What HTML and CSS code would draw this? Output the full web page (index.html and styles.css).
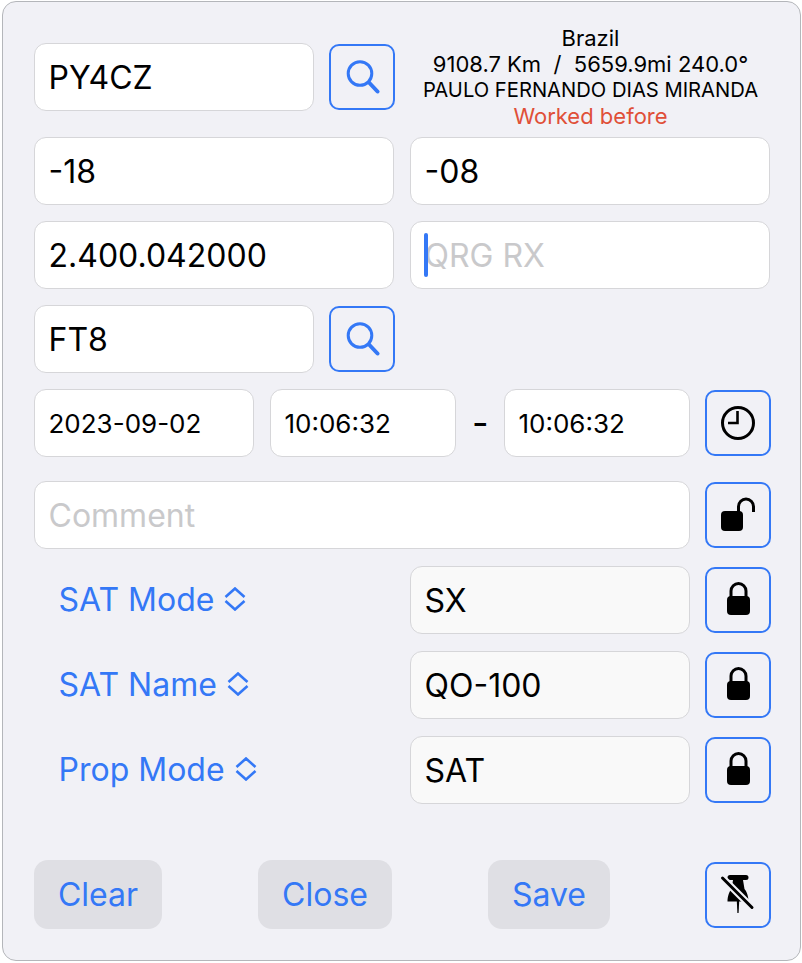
FILE: index.html
```html
<!DOCTYPE html>
<html lang="en">
<head>
    <meta charset="UTF-8">
    <meta name="viewport" content="width=device-width, initial-scale=1.0">
    <title>Log QSO</title>
    <link rel="stylesheet" href="styles.css">
</head>
<body>
    <form class="panel">
        <div class="row row-call">
            <input class="field field-call" type="text" value="PY4CZ">
            <button class="icon-btn" type="button" aria-label="Search callsign">
                <svg class="icon" viewBox="0 0 36 36"><circle cx="16" cy="14.5" r="11.8" class="stroke-blue"/><path d="M25 23.5l8.5 9" class="stroke-blue thick"/></svg>
            </button>
            <div class="info">
                <div>Brazil</div>
                <div>9108.7 Km &nbsp;/&nbsp; 5659.9mi 240.0°</div>
                <div class="info-name">PAULO FERNANDO DIAS MIRANDA</div>
                <div class="info-worked">Worked before</div>
            </div>
        </div>

        <div class="row">
            <input class="field field-half" type="text" value="-18">
            <input class="field field-half" type="text" value="-08">
        </div>

        <div class="row">
            <input class="field field-half" type="text" value="2.400.042000">
            <div class="caret-wrap">
                <input class="field field-half" type="text" placeholder="QRG RX">
                <span class="caret"></span>
            </div>
        </div>

        <div class="row">
            <input class="field field-call" type="text" value="FT8">
            <button class="icon-btn" type="button" aria-label="Search mode">
                <svg class="icon" viewBox="0 0 36 36"><circle cx="16" cy="14.5" r="11.8" class="stroke-blue"/><path d="M25 23.5l8.5 9" class="stroke-blue thick"/></svg>
            </button>
        </div>

        <div class="row row-time">
            <input class="field small field-date" type="text" value="2023-09-02">
            <input class="field small field-time" type="text" value="10:06:32">
            <span class="dash">-</span>
            <input class="field small field-time" type="text" value="10:06:32">
            <button class="icon-btn" type="button" aria-label="Set time">
                <svg class="icon" viewBox="0 0 36 36"><circle cx="18" cy="18" r="15.5" class="stroke-black"/><path d="M17.5 6v12H8" class="stroke-black thin"/></svg>
            </button>
        </div>

        <div class="row row-comment">
            <input class="field field-comment" type="text" placeholder="Comment">
            <button class="icon-btn" type="button" aria-label="Unlock comment">
                <svg class="icon" viewBox="0 0 36 36"><rect x="1" y="14" width="22" height="20" rx="4"/><path d="M18.5 15V9.5a7.5 7.5 0 0 1 15 0V15" class="stroke-black"/></svg>
            </button>
        </div>

        <div class="row row-sat">
            <div class="picker"><span>SAT Mode</span><svg class="updown" viewBox="0 0 22 24"><path d="M1.5 10L11 1.5 20.5 10M1.5 14l9.5 8.5L20.5 14"/></svg></div>
            <input class="field soft" type="text" value="SX">
            <button class="icon-btn" type="button" aria-label="Lock SAT mode">
                <svg class="icon" viewBox="0 0 36 36"><rect x="7" y="14" width="23" height="19" rx="4"/><path d="M11 16V9a7.5 7.5 0 0 1 15 0v7" class="stroke-black"/></svg>
            </button>
        </div>

        <div class="row row-sat">
            <div class="picker"><span>SAT Name</span><svg class="updown" viewBox="0 0 22 24"><path d="M1.5 10L11 1.5 20.5 10M1.5 14l9.5 8.5L20.5 14"/></svg></div>
            <input class="field soft" type="text" value="QO-100">
            <button class="icon-btn" type="button" aria-label="Lock SAT name">
                <svg class="icon" viewBox="0 0 36 36"><rect x="7" y="14" width="23" height="19" rx="4"/><path d="M11 16V9a7.5 7.5 0 0 1 15 0v7" class="stroke-black"/></svg>
            </button>
        </div>

        <div class="row row-sat row-sat-last">
            <div class="picker"><span>Prop Mode</span><svg class="updown" viewBox="0 0 22 24"><path d="M1.5 10L11 1.5 20.5 10M1.5 14l9.5 8.5L20.5 14"/></svg></div>
            <input class="field soft" type="text" value="SAT">
            <button class="icon-btn" type="button" aria-label="Lock prop mode">
                <svg class="icon" viewBox="0 0 36 36"><rect x="7" y="14" width="23" height="19" rx="4"/><path d="M11 16V9a7.5 7.5 0 0 1 15 0v7" class="stroke-black"/></svg>
            </button>
        </div>

        <div class="row row-actions">
            <button class="action action-clear" type="button">Clear</button>
            <button class="action action-close" type="button">Close</button>
            <button class="action action-save" type="button">Save</button>
            <button class="icon-btn" type="button" aria-label="Unpin">
                <svg class="icon-pin" viewBox="0 0 40 42"><path d="M12 1h16a2.5 2.5 0 0 1 0 5h-3l1.5 9c2 2 4 7 4 12.5h-21c0-5.5 2-10.5 4-12.5L15 6h-3a2.5 2.5 0 0 1 0-5z"/><path d="M18.8 27h2.4l-.6 12h-1.2z"/><path d="M4.5 4l29.5 29.5" class="slash-gap"/><path d="M4.5 4l29.5 29.5" class="slash"/></svg>
            </button>
        </div>
    </form>
</body>
</html>
```

FILE: styles.css
```css
* {
    box-sizing: border-box;
}

body {
    margin: 0;
    background: #ffffff;
    font-family: 'Inter', 'Liberation Sans', sans-serif;
    color: #000000;
}

.panel {
    width: 799px;
    height: 960px;
    margin: 1px 0 0 2px;
    padding: 41px 29px 0 31px;
    background: #f1f1f6;
    border: 1px solid #b4b6ba;
    border-radius: 14px;
}

.row {
    display: flex;
    align-items: center;
    gap: 16px;
    height: 68px;
    margin-bottom: 16px;
}

.row > * {
    flex: none;
}

.row-call {
    margin-bottom: 26px;
}

.row-time {
    margin-bottom: 24px;
}

.row-comment {
    margin-bottom: 17px;
}

.row-sat {
    gap: 15px;
    margin-bottom: 17px;
}

.row-sat-last {
    margin-bottom: 56px;
}

.field {
    display: block;
    height: 68px;
    padding: 0 13.5px;
    background: #ffffff;
    border: 1px solid #d6d6d9;
    border-radius: 12px;
    font-family: inherit;
    font-size: 32px;
    color: #000000;
    outline: none;
}

.field::placeholder {
    color: #c9c9cb;
    opacity: 1;
}

.field-call {
    width: 280px;
}

.field-half {
    width: 360px;
}

.field-comment {
    width: 656px;
}

.small {
    font-size: 26px;
}

.field-date {
    width: 220px;
}

.field-time {
    width: 186px;
}

.soft {
    width: 280px;
    background: #f9f9f9;
}

.caret-wrap {
    position: relative;
}

.caret {
    position: absolute;
    left: 14px;
    top: 12px;
    width: 4px;
    height: 44px;
    border-radius: 2px;
    background: #3478f6;
}

.dash {
    width: 16px;
    text-align: center;
    font-size: 36px;
}

.icon-btn {
    display: flex;
    align-items: center;
    justify-content: center;
    width: 66px;
    height: 66px;
    margin-left: -1px;
    padding: 0;
    background: transparent;
    border: 2px solid #3478f6;
    border-radius: 10px;
}

.row-sat .icon-btn {
    margin-left: 0;
}

.icon {
    width: 36px;
    height: 36px;
    fill: #000000;
}

.icon-pin {
    width: 40px;
    height: 42px;
    fill: #000000;
}

.stroke-blue,
.stroke-black {
    fill: none;
    stroke-width: 3px;
}

.stroke-blue {
    stroke: #3478f6;
}

.stroke-black {
    stroke: #000000;
}

.thick {
    stroke-width: 4px;
    stroke-linecap: round;
}

.thin {
    stroke-width: 2.6px;
}

.slash {
    fill: none;
    stroke: #000000;
    stroke-width: 3px;
    stroke-linecap: round;
}

.slash-gap {
    fill: none;
    stroke: #f1f1f6;
    stroke-width: 7px;
}

.info {
    width: 359px;
    font-size: 22px;
    line-height: 26px;
    text-align: center;
    white-space: nowrap;
}

.info-name {
    font-size: 20.2px;
}

.info-worked {
    color: #e04f38;
}

.picker {
    display: flex;
    align-items: center;
    gap: 10px;
    width: 361px;
    padding: 0 0 2px 24.5px;
    font-size: 32px;
    color: #3478f6;
}

.updown {
    width: 22px;
    height: 24px;
    fill: none;
    stroke: #3478f6;
    stroke-width: 2.6px;
}

.row-actions {
    gap: 0;
    height: 69px;
    margin-bottom: 0;
}

.action {
    height: 69px;
    padding: 0;
    background: #dfdfe4;
    border: none;
    border-radius: 14px;
    font-family: inherit;
    font-size: 32px;
    color: #3478f6;
}

.action-clear {
    width: 128px;
}

.action-close {
    width: 134px;
    margin-left: 96px;
}

.action-save {
    width: 122px;
    margin-left: 96px;
}

.row-actions .icon-btn {
    margin-left: 95px;
}
```
